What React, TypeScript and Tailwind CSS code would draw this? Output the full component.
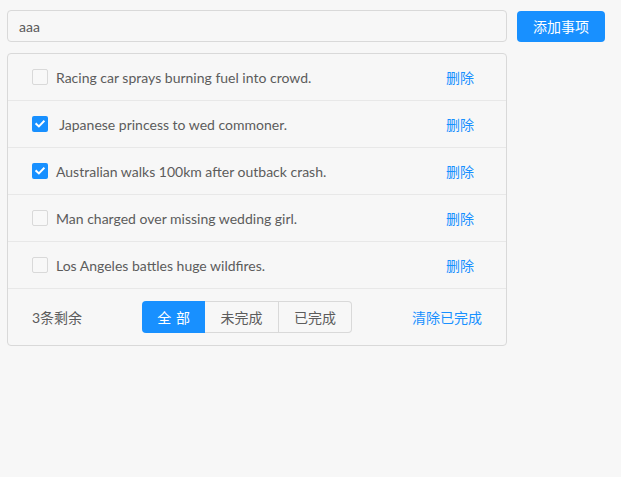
import React from "react";

const items = [
  { text: "Racing car sprays burning fuel into crowd.", done: false },
  { text: "\u00a0Japanese princess to wed commoner.", done: true },
  { text: "Australian walks 100km after outback crash.", done: true },
  { text: "Man charged over missing wedding girl.", done: false },
  { text: "Los Angeles battles huge wildfires.", done: false },
];

function Check({ on }: { on: boolean }) {
  if (on) {
    return (
      <span className="flex h-4 w-4 shrink-0 items-center justify-center rounded-[2px] bg-[#1890ff]">
        <svg width="10" height="8" viewBox="0 0 10 8">
          <path d="M1.3 4 L3.9 6.4 L8.7 1.5" fill="none" stroke="#fff" strokeWidth="2" strokeLinecap="square" />
        </svg>
      </span>
    );
  }
  return <span className="h-4 w-4 shrink-0 rounded-[2px] border border-[#d9d9d9] bg-[#f8f8f8]" />;
}

export default function App() {
  return (
    <div
      className="min-h-screen bg-[#f7f7f7] pl-[7px] pt-[10px] text-[14px] text-[#5c5c5c]"
      style={{ fontFamily: 'Lato, "Noto Sans CJK SC", sans-serif' }}
    >
      <div className="flex items-start gap-[10px]">
        <div className="flex h-[32px] w-[500px] items-center rounded-[4px] border border-[#d9d9d9] px-[11px] text-[#595959]">
          aaa
        </div>
        <div className="mt-[1px] flex h-[31px] w-[88px] items-center justify-center rounded-[4px] bg-[#1890ff] text-white">
          添加事项
        </div>
      </div>
      <div className="mt-[11px] w-[500px] rounded-[4px] border border-[#d9d9d9]">
        {items.map((it, i) => (
          <div key={i} className="flex h-[47px] items-center border-b border-[#e8e8e8] pl-[24px] pr-[32px]">
            <Check on={it.done} />
            <span className="ml-[8px] flex-1 whitespace-pre">{it.text}</span>
            <span className="text-[#1890ff]">删除</span>
          </div>
        ))}
        <div className="flex h-[56px] items-center justify-between pl-[24px] pr-[24px]">
          <span>3条剩余</span>
          <div className="flex h-[32px]">
            <div className="flex w-[63px] items-center justify-center rounded-l-[4px] bg-[#1890ff] tracking-[0.34em] text-white">
              <span className="-mr-[0.34em]">全部</span>
            </div>
            <div className="flex w-[74px] items-center justify-center border-y border-r border-[#d9d9d9]">未完成</div>
            <div className="flex w-[73px] items-center justify-center rounded-r-[4px] border-y border-r border-[#d9d9d9]">已完成</div>
          </div>
          <span className="text-[#1890ff]">清除已完成</span>
        </div>
      </div>
    </div>
  );
}
